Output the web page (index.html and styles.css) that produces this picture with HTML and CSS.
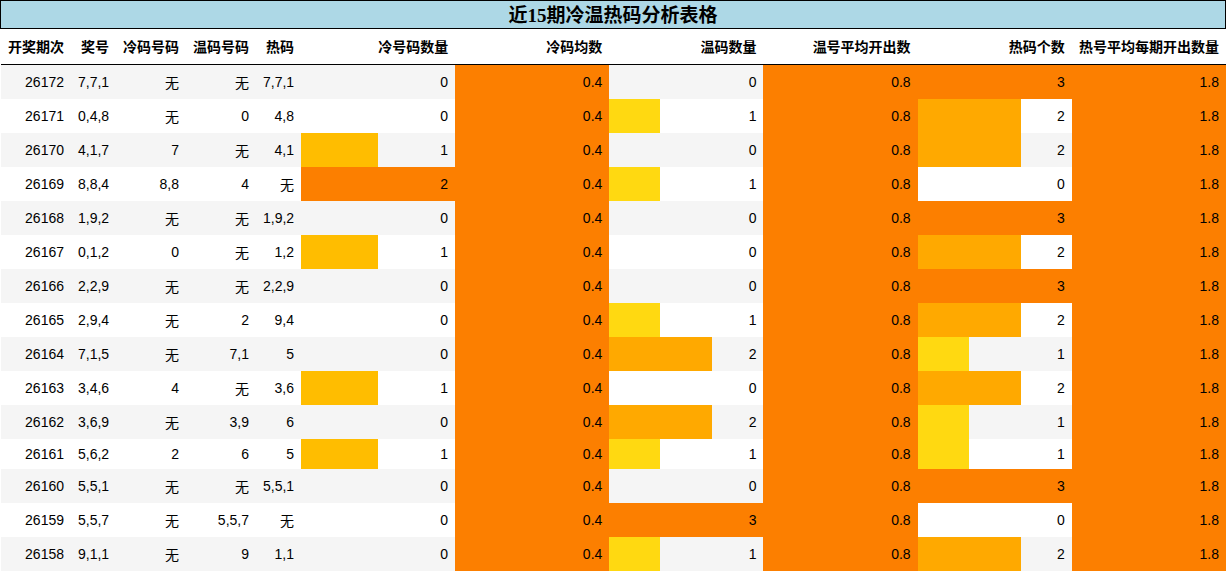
FILE: index.html
```html
<!DOCTYPE html>
<html lang="zh">
<head>
<meta charset="utf-8">
<title>近15期冷温热码分析表格</title>
<link rel="stylesheet" href="styles.css">
</head>
<body>
<div class="title">近15期冷温热码分析表格</div>
<table class="grid">
<colgroup>
<col class="c70"><col class="c45"><col class="c70"><col class="c70"><col class="c45">
<col><col><col><col><col><col>
</colgroup>
<thead>
<tr><th>开奖期次</th><th>奖号</th><th>冷码号码</th><th>温码号码</th><th>热码</th><th>冷号码数量</th><th>冷码均数</th><th>温码数量</th><th>温号平均开出数</th><th>热码个数</th><th>热号平均每期开出数量</th></tr>
</thead>
<tbody>
<tr><td>26172</td><td>7,7,1</td><td>无</td><td>无</td><td>7,7,1</td><td>0</td><td class="full">0.4</td><td>0</td><td class="full">0.8</td><td class="full">3</td><td class="full">1.8</td></tr>
<tr><td>26171</td><td>0,4,8</td><td>无</td><td>0</td><td>4,8</td><td>0</td><td class="full">0.4</td><td class="third">1</td><td class="full">0.8</td><td class="twothird">2</td><td class="full">1.8</td></tr>
<tr><td>26170</td><td>4,1,7</td><td>7</td><td>无</td><td>4,1</td><td class="half">1</td><td class="full">0.4</td><td>0</td><td class="full">0.8</td><td class="twothird">2</td><td class="full">1.8</td></tr>
<tr><td>26169</td><td>8,8,4</td><td>8,8</td><td>4</td><td>无</td><td class="full">2</td><td class="full">0.4</td><td class="third">1</td><td class="full">0.8</td><td>0</td><td class="full">1.8</td></tr>
<tr><td>26168</td><td>1,9,2</td><td>无</td><td>无</td><td>1,9,2</td><td>0</td><td class="full">0.4</td><td>0</td><td class="full">0.8</td><td class="full">3</td><td class="full">1.8</td></tr>
<tr><td>26167</td><td>0,1,2</td><td>0</td><td>无</td><td>1,2</td><td class="half">1</td><td class="full">0.4</td><td>0</td><td class="full">0.8</td><td class="twothird">2</td><td class="full">1.8</td></tr>
<tr><td>26166</td><td>2,2,9</td><td>无</td><td>无</td><td>2,2,9</td><td>0</td><td class="full">0.4</td><td>0</td><td class="full">0.8</td><td class="full">3</td><td class="full">1.8</td></tr>
<tr><td>26165</td><td>2,9,4</td><td>无</td><td>2</td><td>9,4</td><td>0</td><td class="full">0.4</td><td class="third">1</td><td class="full">0.8</td><td class="twothird">2</td><td class="full">1.8</td></tr>
<tr><td>26164</td><td>7,1,5</td><td>无</td><td>7,1</td><td>5</td><td>0</td><td class="full">0.4</td><td class="twothird">2</td><td class="full">0.8</td><td class="third">1</td><td class="full">1.8</td></tr>
<tr><td>26163</td><td>3,4,6</td><td>4</td><td>无</td><td>3,6</td><td class="half">1</td><td class="full">0.4</td><td>0</td><td class="full">0.8</td><td class="twothird">2</td><td class="full">1.8</td></tr>
<tr><td>26162</td><td>3,6,9</td><td>无</td><td>3,9</td><td>6</td><td>0</td><td class="full">0.4</td><td class="twothird">2</td><td class="full">0.8</td><td class="third">1</td><td class="full">1.8</td></tr>
<tr><td>26161</td><td>5,6,2</td><td>2</td><td>6</td><td>5</td><td class="half">1</td><td class="full">0.4</td><td class="third">1</td><td class="full">0.8</td><td class="third">1</td><td class="full">1.8</td></tr>
<tr><td>26160</td><td>5,5,1</td><td>无</td><td>无</td><td>5,5,1</td><td>0</td><td class="full">0.4</td><td>0</td><td class="full">0.8</td><td class="full">3</td><td class="full">1.8</td></tr>
<tr><td>26159</td><td>5,5,7</td><td>无</td><td>5,5,7</td><td>无</td><td>0</td><td class="full">0.4</td><td class="full">3</td><td class="full">0.8</td><td>0</td><td class="full">1.8</td></tr>
<tr><td>26158</td><td>9,1,1</td><td>无</td><td>9</td><td>1,1</td><td>0</td><td class="full">0.4</td><td class="third">1</td><td class="full">0.8</td><td class="twothird">2</td><td class="full">1.8</td></tr>
</tbody>
</table>
</body>
</html>
```

FILE: styles.css
```css
html, body {
  margin: 0;
  padding: 0;
  background: #fff;
}
body {
  font-family: "Liberation Sans", "Noto Sans CJK SC", sans-serif;
  font-size: 14px;
  color: #000;
}
.title {
  box-sizing: border-box;
  width: 1226px;
  height: 29px;
  line-height: 29px;
  border: 1px solid #000;
  background: #add8e6;
  text-align: center;
  font-family: "Liberation Serif", "Noto Sans CJK SC", serif;
  font-weight: bold;
  font-size: 19px;
}
.grid {
  margin-left: 1px;
  width: 1225px;
  border-collapse: collapse;
  border-spacing: 0;
  table-layout: fixed;
}
.c70 { width: 70px; }
.c45 { width: 45px; }
.grid thead {
  border-bottom: 1px solid #000;
}
.grid th,
.grid td {
  padding: 7px;
  text-align: right;
  vertical-align: middle;
  line-height: normal;
  white-space: nowrap;
  border: none;
}
.grid th {
  font-weight: bold;
  padding-bottom: 8px;
}
.grid tbody tr:nth-child(odd) {
  background: #f5f5f5;
}
.grid tbody tr:nth-child(even) {
  background: #fff;
}
.full {
  background: #fc7f00;
}
.half {
  background: linear-gradient(90deg, #ffbd00 50%, transparent 50%);
}
.third {
  background: linear-gradient(90deg, #ffd911 33.3%, transparent 33.3%);
}
.twothird {
  background: linear-gradient(90deg, #ffa900 66.7%, transparent 66.7%);
}
```
